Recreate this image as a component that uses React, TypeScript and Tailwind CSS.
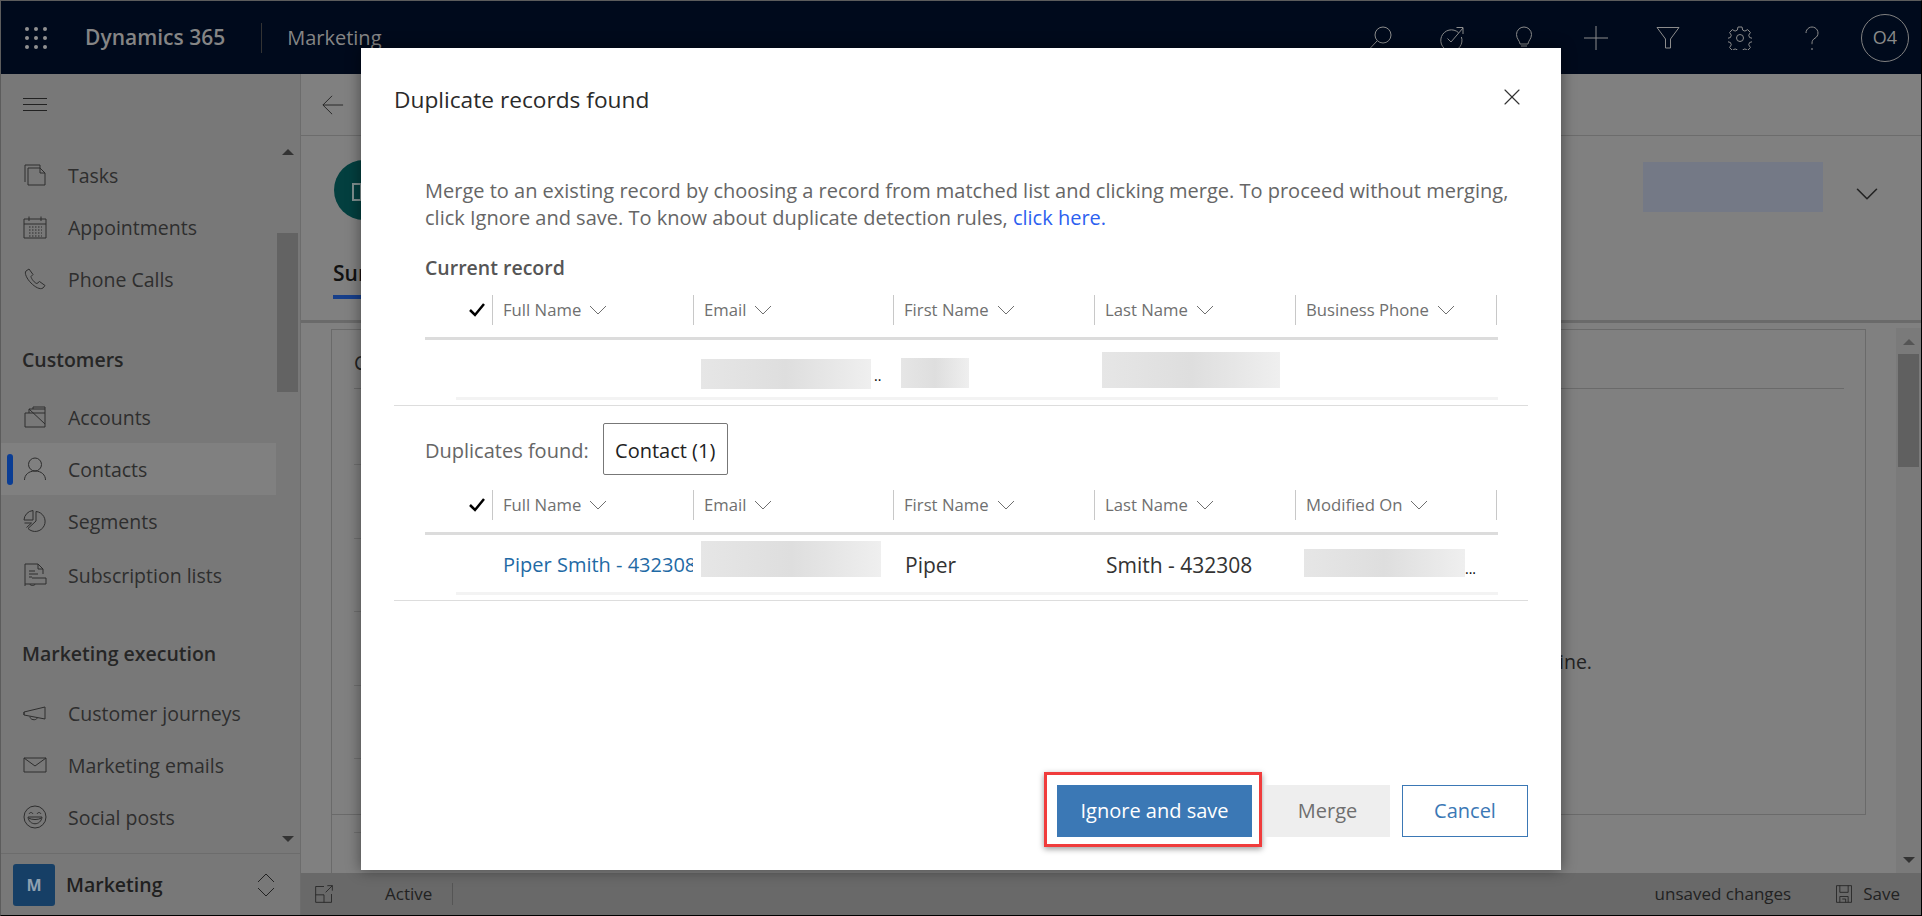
import React from "react";
import { ChevronDown, X } from "lucide-react";

const Svg = ({ size = 24, className, children }: { size?: number; className?: string; children: React.ReactNode }) => (
  <svg
    width={size}
    height={size}
    viewBox="0 0 24 24"
    fill="none"
    stroke="currentColor"
    strokeWidth="1"
    className={className}
  >
    {children}
  </svg>
);

const headerIcons: React.ReactNode[] = [
  <>
    <circle cx="15" cy="9" r="8" />
    <path d="M9.2 14.8 1 23.5" />
  </>,
  <>
    <path d="M18.5 6.6a10.6 10.6 0 1 0 2.9 4.4" />
    <path d="M7.5 12.5l3.5 3.5L23 2M16.5 1.5H23V8" />
  </>,
  <>
    <path d="M8 18c0-3-3.5-5-3.5-9.5a7.5 7.5 0 0 1 15 0C19.500 13 16 15 16 18z" />
    <path d="M9 20h6M10 23h4" />
  </>,
  <path d="M12 0v24M0 12h24" />,
  <path d="M1 1.500h22L14.500 13v9h-5v-9z" />,
  <>
    <circle cx="12" cy="12" r="3.500" />
    <path d="M10 1h4l.7 3.100 2.200 1 2.800-1.500 2.700 2.900-1.700 2.700.9 2.300 3 .9v3.200l-3 .9-.9 2.300 1.700 2.700-2.700 2.900-2.800-1.500-2.200 1-.7 1.600h-4l-.7-1.600-2.200-1-2.800 1.500-2.700-2.900 1.700-2.700-.9-2.300-3-.9v-3.200l3-.9.9-2.300-1.700-2.700 2.700-2.900 2.800 1.500 2.200-1z" />
  </>,
  <>
    <path d="M6 7a6 6 0 1 1 9 5.200c-2 1.200-3 2.400-3 5v1" />
    <circle cx="12" cy="23" r=".5" />
  </>,
];

const navIcons: Record<string, React.ReactNode> = {
  Tasks: (
    <>
      <path d="M2 19V2h15v3" />
      <path d="M5 22V5h12l5 5v12zM17 5v5h5" />
    </>
  ),
  Appointments: (
    <>
      <path d="M1 4h22v19H1zM1 9h22M6 1.500V6M18 1.500V6" />
      <path strokeDasharray="1.500 1.500" d="M6 12h13M6 15h13M6 18h13M6 21h13" />
    </>
  ),
  "Phone Calls": (
    <path d="M6 2 3 4c-2 2 1 8 5 12s9 7 12 5l2-2.500-5.500-4-2.500 2c-2 0-6-5-6-7l2-2z" />
  ),
  Accounts: (
    <path d="M2 22V8h20v14zM6 8V4h16M6 4l16 15M10 4V2h12v6" />
  ),
  Contacts: (
    <>
      <circle cx="12" cy="7.500" r="6.500" />
      <path d="M1.500 23c0-5 4-9 10.500-9s10.500 4 10.500 9" />
    </>
  ),
  Segments: (
    <>
      <path d="M10 1.500A10 10 0 0 0 1 11h9zM13 2.500a10 10 0 1 1-8 17L13 12zM1.500 14l7 0-5 4.500" />
    </>
  ),
  "Subscription lists": (
    <path d="M2 23V1h13l5 5v5M15 1v5h5M6 8h6M6 11h9M6 14h3M9 15h14v6H2M7 21c0 2 5 2 5 0" />
  ),
  "Customer journeys": (
    <path d="M1 11 22 6v12L1 14zM1 11v3M7 15.500c0 4 7 4 7 1.500" />
  ),
  "Marketing emails": <path d="M1 5h22v14H1zM1 5l11 8 11-8" />,
  "Social posts": (
    <>
      <circle cx="12" cy="12" r="11" />
      <path d="M6 9c1-2 3-2 4 0M14 9c1-2 3-2 4 0M5 12c1 9 13 9 14 0zM5.500 13c3 2 10 2 13 0" />
    </>
  ),
};

const NavItem = ({ label, active, h = 52 }: { label: string; active?: boolean; h?: number }) => (
  <div
    className={`flex items-center pl-[22px] w-[275px] ${active ? "bg-[#808080] relative" : ""}`}
    style={{ height: h }}
  >
    {active && <span className="absolute left-[6px] top-[11px] h-[31px] w-[6px] rounded-sm bg-[#0a3d94]" />}
    <Svg className="text-[#2e2e2e] shrink-0">{navIcons[label]}</Svg>
    <span className="ml-[21px] pt-[2px] text-[19.5px] text-[#2e2e2e] whitespace-nowrap">{label}</span>
  </div>
);

const Sidebar = () => (
  <aside className="flex h-full w-[300px] shrink-0 flex-col border-r border-[#6c6c6c] bg-[#787878]">
    <div className="flex h-[75px] shrink-0 items-start pl-[22px] pt-[24px]">
      <div className="flex w-[24px] flex-col gap-[5px]">
        <span className="h-px bg-[#222]" />
        <span className="h-px bg-[#222]" />
        <span className="h-px bg-[#222]" />
      </div>
    </div>
    <div className="flex min-h-0 flex-1">
      <div className="w-[276px] shrink-0 overflow-hidden">
        <NavItem label="Tasks" />
        <NavItem label="Appointments" />
        <NavItem label="Phone Calls" />
        <h3 className="pl-[21px] pt-[43px] pb-[19px] text-[19.5px] leading-[24px] font-semibold text-[#262626]">Customers</h3>
        <NavItem label="Accounts" />
        <NavItem label="Contacts" active />
        <NavItem label="Segments" />
        <NavItem label="Subscription lists" h={56} />
        <h3 className="pl-[21px] pt-[39px] pb-[21px] text-[19.5px] leading-[24px] font-semibold text-[#262626]">Marketing execution</h3>
        <NavItem label="Customer journeys" />
        <NavItem label="Marketing emails" />
        <NavItem label="Social posts" />
      </div>
      <div className="flex flex-1 flex-col items-center pr-[2px]">
        <span className="mt-[0px] h-0 w-0 border-x-[6px] border-b-[6px] border-x-transparent border-b-[#333]" />
        <div className="mt-[78px] h-[159px] w-[21px] shrink-0 bg-[#636363]" />
        <span className="mt-auto mb-[11px] h-0 w-0 border-x-[6px] border-t-[6px] border-x-transparent border-t-[#333]" />
      </div>
    </div>
    <div className="flex h-[62px] shrink-0 items-center border-t border-[#6c6c6c] pl-[12px]">
      <div className="flex h-[42px] w-[42px] items-center justify-center rounded-[3px] bg-[#163f66] text-[16px] font-bold text-[#8fa0b0]">M</div>
      <span className="ml-[11px] text-[19.5px] font-semibold text-[#1f1f1f]">Marketing</span>
      <svg width="18" height="24" viewBox="0 0 18 24" fill="none" stroke="#222" className="mr-[25px] ml-auto">
        <path d="M1 9l8-8 8 8M1 15l8 8 8-8" />
      </svg>
    </div>
  </aside>
);

const MainBehind = () => (
  <main className="flex h-full min-w-0 flex-1 flex-col bg-[#808080]">
    <div className="flex h-[62px] shrink-0 items-center border-b border-[#6c6c6c] pl-[21px]">
      <Svg size={22} className="text-[#222]">
        <path d="M23 12H1M11 2 1 12l10 10" />
      </Svg>
    </div>
    <div className="relative flex h-[187px] shrink-0 border-b-[3px] border-[#6a6a6a]">
      <div className="mt-[24px] ml-[33px] h-[60px] w-[60px] rounded-full bg-[#033f3f] pt-[23px] pl-[18px]">
        <div className="h-[18px] w-[10px] border-2 border-[#7f8f8f]" />
      </div>
      <span className="absolute left-[32px] top-[122px] text-[21px] font-semibold text-[#111]">Summary</span>
      <span className="absolute left-[32px] top-[159px] h-[4px] w-[70px] bg-[#173f8a]" />
      <div className="mt-[26px] ml-auto h-[50px] w-[180px] bg-[#747986]" />
      <ChevronDown size={38} strokeWidth={1} className="mt-[39px] mr-[35px] ml-[25px] text-[#222]" />
    </div>
    <div className="flex min-h-0 flex-1">
      <div className="mt-[6px] ml-[30px] flex-1 self-stretch border-l border-[#6a6a6a]">
        <div className="h-[486px] border-t border-r border-b border-[#6a6a6a] pl-[22px]">
          <div className="h-[59px] w-[1490px] border-b border-[#6a6a6a] pt-[18px] text-[20px] text-[#222]">Contact information</div>
          <div className="h-[75px]" />
          {[0, 1, 2, 3, 4, 5].map((i) => (
            <div key={i} className="h-[73.500px] w-[1180px] border-t border-[#6f6f6f]">
              {i === 2 && (
                <p className="mt-[35px] w-[1238px] text-right text-[19.5px] whitespace-nowrap text-[#222]">Contact is online.</p>
              )}
            </div>
          ))}
        </div>
      </div>
      <div className="mt-[5px] ml-[30px] flex w-[25px] shrink-0 flex-col items-center bg-[#7a7a7a] pt-[11px]">
        <span className="h-0 w-0 border-x-[6px] border-b-[6px] border-x-transparent border-b-[#555]" />
        <div className="mt-[9px] h-[113px] w-[21px] bg-[#606060]" />
        <span className="mt-auto mb-[10px] h-0 w-0 border-x-[6px] border-t-[6px] border-x-transparent border-t-[#333]" />
      </div>
    </div>
    <div className="flex h-[42px] shrink-0 items-center bg-[#696969] text-[17px] text-[#222]">
      <Svg size={20} className="ml-[13px]">
        <path d="M12 3H2v19h19V12M2 13h10v9M14 10l8-8M16 2h6v6" />
      </Svg>
      <span className="ml-[51px]">Active</span>
      <span className="ml-[20px] h-[22px] w-px bg-[#555]" />
      <span className="ml-auto">unsaved changes</span>
      <Svg size={20} className="ml-[43px]">
        <path d="M3 2h18v20H3zM7 2v8h10V2M7 22v-7h10v7M10 18h4v4" />
      </Svg>
      <span className="mr-[21px] ml-[9px]">Save</span>
    </div>
  </main>
);

const Blur = ({ className }: { className: string }) => (
  <div className={`bg-linear-to-r from-[#e6e6e6] via-[#dedede] to-[#efefef] ${className}`} />
);

const GridCols = "grid grid-cols-[67px_201px_200px_201px_201px_202px]";

const TableHead = ({ columns }: { columns: string[] }) => (
  <div className={`${GridCols} ml-[31px] w-[1073px] border-b-[3px] border-[#dcdcdc] pb-[12px]`}>
    <div className="flex h-[30px] items-center justify-end pr-[7px]">
      <svg width="16" height="14" viewBox="0 0 16 14" fill="none" stroke="#000" strokeWidth="2.5">
        <path d="M1 7l5 5L15 1" />
      </svg>
    </div>
    {columns.map((c, i) => (
      <div
        key={c}
        className={`flex h-[30px] items-center gap-[8px] border-l border-[#c8c8c8] pl-[10px] text-[16.7px] text-[#6f6f6f] ${i === columns.length - 1 ? "border-r" : ""}`}
      >
        {c}
        <svg width="18" height="10" viewBox="0 0 18 10" fill="none" stroke="#6f6f6f">
          <path d="M1 1l8 8 8-8" />
        </svg>
      </div>
    ))}
  </div>
);

const Divider = () => <div className="h-px bg-[#dddddd]" />;

const Modal = () => (
  <div className="absolute top-[47px] left-[360px] flex h-[822px] w-[1200px] flex-col bg-white px-[33px] shadow-[0_0_14px_rgba(0,0,0,0.45)]">
    <div className="flex h-[106px] shrink-0 items-start justify-between pt-[34px]">
      <h2 className="text-[22.7px] leading-[36px] text-[#2a2a2a]">Duplicate records found</h2>
      <X size={28} strokeWidth={1} className="mt-[1px] mr-[2px] text-[#333]" />
    </div>
    <p className="mt-[23px] ml-[31px] shrink-0 text-[20px] leading-[27px] whitespace-nowrap text-[#666]">
      Merge to an existing record by choosing a record from matched list and clicking merge. To proceed without merging,
      <br />
      click Ignore and save. To know about duplicate detection rules, <a className="text-[#2c60f0]">click here.</a>
    </p>
    <h3 className="mt-[25px] ml-[31px] text-[19.5px] leading-[24px] font-semibold text-[#555]">Current record</h3>
    <div className="mt-[15px] shrink-0">
      <TableHead columns={["Full Name", "Email", "First Name", "Last Name", "Business Phone"]} />
      <div className={`${GridCols} ml-[31px] h-[57px] w-[1073px]`}>
        <div />
        <div />
        <div className="flex items-start pt-[19px] pl-[8px]">
          <Blur className="h-[30px] w-[170px]" />
          <span className="mt-[10px] ml-[3px] text-[14px] leading-[14px]">..</span>
        </div>
        <div className="pt-[18px] pl-[8px]">
          <Blur className="h-[30px] w-[68px]" />
        </div>
        <div className="pt-[12px] pl-[8px]">
          <Blur className="h-[36px] w-[178px]" />
        </div>
        <div />
      </div>
      <div className="ml-[62px] h-[3px] w-[1042px] bg-[#f3f3f3]" />
    </div>
    <div className="mt-[5px]">
      <Divider />
    </div>
    <div className="mt-[17px] flex h-[52px] shrink-0 items-center">
      <span className="ml-[31px] pt-[3px] text-[20px] text-[#666]">Duplicates found:</span>
      <span className="ml-[14px] flex h-[52px] w-[125px] items-center justify-center rounded-[2px] border border-[#777] pt-[3px] text-[20px] text-[#222]">Contact (1)</span>
    </div>
    <div className="mt-[15px] shrink-0">
      <TableHead columns={["Full Name", "Email", "First Name", "Last Name", "Modified On"]} />
      <div className={`${GridCols} ml-[31px] h-[57px] w-[1073px] text-[21px] leading-[28px]`}>
        <div />
        <div className="overflow-hidden pt-[16px] pl-[11px] text-[20px] whitespace-nowrap text-[#1f6aa5]">Piper Smith - 432308</div>
        <div className="pt-[6px] pl-[8px]">
          <Blur className="h-[36px] w-[180px]" />
        </div>
        <div className="pt-[16px] pl-[12px] text-[#333]">Piper</div>
        <div className="pt-[16px] pl-[12px] text-[#333]">Smith - 432308</div>
        <div className="flex items-start pt-[14px] pl-[9px]">
          <Blur className="h-[28px] w-[161px]" />
          <span className="mt-[13px] text-[14px] leading-[14px]">...</span>
        </div>
      </div>
      <div className="ml-[62px] h-[3px] w-[1042px] bg-[#f3f3f3]" />
    </div>
    <div className="mt-[5px]">
      <Divider />
    </div>
    <div className="mt-auto mb-[23px] flex items-start justify-end">
      <div className="border-[3px] border-[#f03c3c] pt-[10px] pr-[7px] pb-[7px] pl-[10px] shadow-[0_2px_6px_rgba(0,0,0,0.4)]">
        <button className="block h-[52px] w-[195px] bg-[#3b78b5] text-[20px] text-white">Ignore and save</button>
      </div>
      <button className="mt-[13px] ml-[3px] h-[52px] w-[125px] bg-[#eeeeee] text-[20px] text-[#6f6f6f]">Merge</button>
      <button className="mt-[13px] ml-[12px] h-[52px] w-[126px] border border-[#3b78b5] text-[20px] text-[#3b78b5]">Cancel</button>
    </div>
  </div>
);

export default function App() {
  return (
    <div className="relative flex h-[916px] w-[1922px] flex-col overflow-hidden border-t border-r border-b border-l border-t-[#5c5c5c] border-r-black border-b-black border-l-[#5c5c5c] font-['Open_Sans','Noto_Sans',sans-serif]">
      <header className="flex h-[73px] shrink-0 items-center bg-[#000a1c] text-[#858585]">
        <div className="ml-[24px] grid grid-cols-3 gap-[5px]">
          {Array.from({ length: 9 }).map((_, i) => (
            <span key={i} className="h-[4px] w-[4px] rounded-full bg-[#909090]" />
          ))}
        </div>
        <span className="ml-[38px] text-[21px] font-semibold">Dynamics 365</span>
        <span className="ml-[36px] h-[30px] w-px bg-[#333]" />
        <span className="ml-[25px] text-[20px]">Marketing</span>
        <div className="ml-auto flex items-center gap-[48px]">
          {headerIcons.map((icon, i) => (
            <Svg key={i} className="text-[#8c8c8c]">
              {icon}
            </Svg>
          ))}
        </div>
        <div className="mr-[12px] ml-[37px] flex h-[48px] w-[48px] items-center justify-center rounded-full border border-[#808080] text-[18px] text-[#8a8a8a]">O4</div>
      </header>
      <div className="flex min-h-0 flex-1">
        <Sidebar />
        <MainBehind />
      </div>
      <Modal />
    </div>
  );
}
